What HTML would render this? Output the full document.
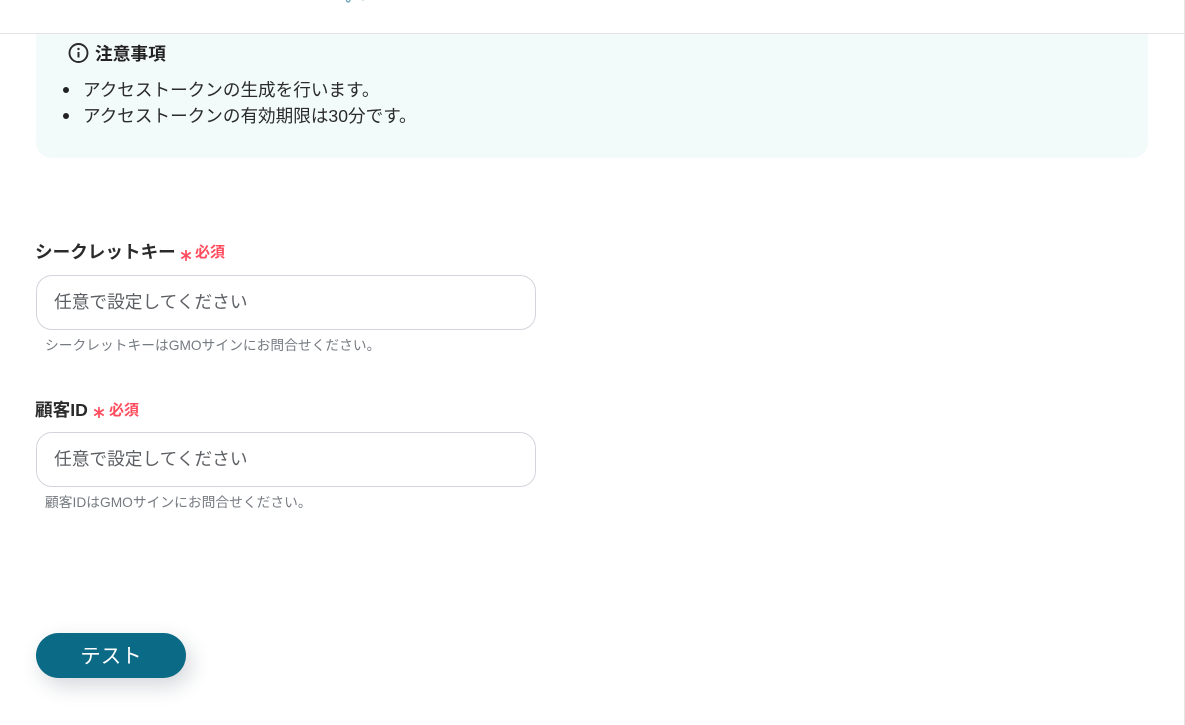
<!DOCTYPE html>
<html lang="ja"><head><meta charset="utf-8">
<style>
html,body{margin:0;padding:0;width:1185px;height:725px;overflow:hidden;background:#fff}
body{font-family:"Liberation Sans","Noto Sans CJK JP",sans-serif;color:#2b2b2b;position:relative}
.a{position:absolute;white-space:nowrap}
.input{position:absolute;left:36px;width:498px;height:53px;border:1px solid #d2d5db;border-radius:16px;background:#fff}
.ph{font-size:17.7px;line-height:26px;color:#5c5f63;left:54px}
.label{font-size:17.6px;font-weight:700;line-height:24px;color:#2b2b2b;left:35px}
.req{font-size:15px;font-weight:700;line-height:20px;color:#ff4d5e}
.help{font-size:13.75px;line-height:20px;color:#767b82;left:45px}
.li{font-size:17.6px;line-height:26px;left:83px;color:#2b2b2b}
.dot{position:absolute;left:63px;width:6px;height:6px;border-radius:50%;background:#222}
</style></head><body>
<div class="a" style="left:1184px;top:0;width:1px;height:725px;background:#e4e4e6"></div>
<div class="a" style="left:36px;top:34px;width:1112px;height:124px;background:#f2fafa;border-radius:0 0 16px 16px"></div>
<div class="a" style="left:0;top:33px;width:1185px;height:1px;background:#e2e4e8"></div>
<svg class="a" style="left:344px;top:0" width="22" height="3" viewBox="0 0 22 3"><path d="M2.500 0c0 1.300.8 2 1.700 2s1.800-.7 1.800-2" fill="none" stroke="#5b9bb5" stroke-width="1.200"/><path d="M18 0h2v1h-2z" fill="#cfe2ea"/></svg>
<svg class="a" style="left:68px;top:43px" width="21" height="21" viewBox="0 0 21 21"><circle cx="10.500" cy="10" r="9" fill="none" stroke="#2b2b2b" stroke-width="1.900"/><circle cx="10.500" cy="6" r="1.200" fill="#2b2b2b"/><path d="M10.500 9v5.500" stroke="#2b2b2b" stroke-width="2" fill="none"/></svg>
<div class="a" style="left:95px;top:42px;font-size:17.700px;font-weight:700;line-height:25px;color:#222">注意事項</div>
<div class="dot" style="top:87px"></div>
<div class="a li" style="top:77px">アクセストークンの生成を行います。</div>
<div class="dot" style="top:113px"></div>
<div class="a li" style="top:103px">アクセストークンの有効期限は30分です。</div>

<div class="a label" style="top:240px">シークレットキー</div>
<svg class="a" style="left:180px;top:249px" width="12" height="13" viewBox="0 0 12 13"><path d="M6 1v11M1.200 3.500l9.600 6M10.800 3.500l-9.600 6" stroke="#ff4d5e" stroke-width="1.700" fill="none"/></svg>
<div class="a req" style="left:195px;top:243px">必須</div>
<div class="input" style="top:275px"></div>
<div class="a ph" style="top:289px">任意で設定してください</div>
<div class="a help" style="top:336px">シークレットキーはGMOサインにお問合せください。</div>

<div class="a label" style="top:398px">顧客ID</div>
<svg class="a" style="left:93px;top:406px" width="12" height="13" viewBox="0 0 12 13"><path d="M6 1v11M1.200 3.500l9.600 6M10.800 3.500l-9.600 6" stroke="#ff4d5e" stroke-width="1.700" fill="none"/></svg>
<div class="a req" style="left:109px;top:401px">必須</div>
<div class="input" style="top:432px"></div>
<div class="a ph" style="top:446px">任意で設定してください</div>
<div class="a help" style="top:493px">顧客IDはGMOサインにお問合せください。</div>

<div class="a" style="left:36px;top:633px;width:150px;height:45px;border-radius:23px;background:#0b6a85;box-shadow:5px 8px 20px rgba(40,60,80,.2)"></div>
<div class="a" style="left:36px;top:635px;width:150px;height:45px;line-height:44px;text-align:center;color:#fff;font-size:20.500px">テスト</div>
</body></html>
